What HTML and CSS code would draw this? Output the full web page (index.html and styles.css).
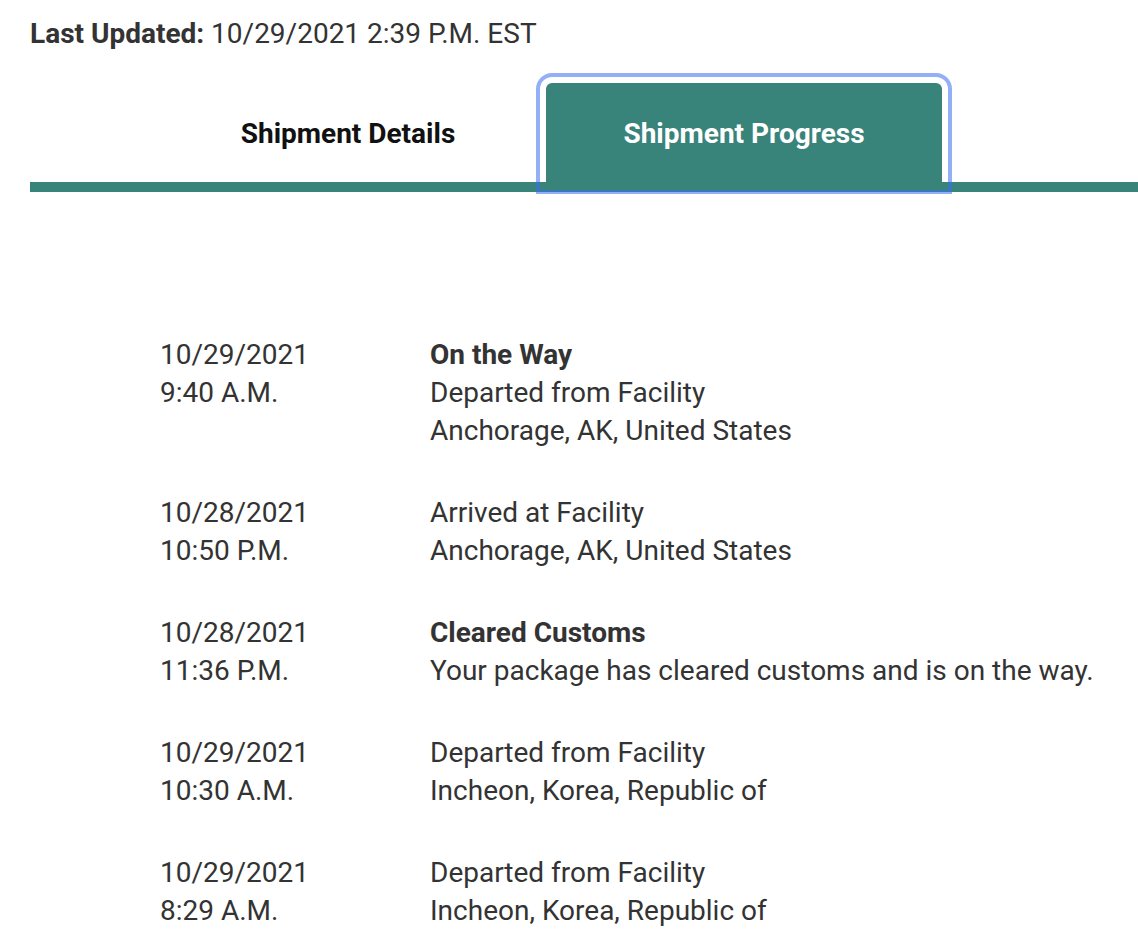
FILE: index.html
```html
<!DOCTYPE html>
<html>
<head>
<meta charset="utf-8">
<link rel="stylesheet" href="styles.css">
</head>
<body>
<div class="page">
  <p class="updated"><strong>Last Updated:</strong> 10/29/2021 2:39 P.M. EST</p>
  <div class="tabs">
    <button class="tab">Shipment Details</button>
    <button class="tab active">Shipment Progress</button>
  </div>
  <ul class="timeline">
    <li class="event">
      <div class="when">10/29/2021<br>9:40 A.M.</div>
      <div class="what"><strong>On the Way</strong><br>Departed from Facility<br>Anchorage, AK, United States</div>
    </li>
    <li class="event">
      <div class="when">10/28/2021<br>10:50 P.M.</div>
      <div class="what">Arrived at Facility<br>Anchorage, AK, United States</div>
    </li>
    <li class="event">
      <div class="when">10/28/2021<br>11:36 P.M.</div>
      <div class="what"><strong>Cleared Customs</strong><br>Your package has cleared customs and is on the way.</div>
    </li>
    <li class="event">
      <div class="when">10/29/2021<br>10:30 A.M.</div>
      <div class="what">Departed from Facility<br>Incheon, Korea, Republic of</div>
    </li>
    <li class="event">
      <div class="when">10/29/2021<br>8:29 A.M.</div>
      <div class="what">Departed from Facility<br>Incheon, Korea, Republic of</div>
    </li>
  </ul>
</div>
</body>
</html>
```

FILE: styles.css
```css
* { box-sizing: border-box; }
html, body { margin: 0; padding: 0; background: #fff; }
body {
  font-family: Roboto, "Liberation Sans", sans-serif;
  color: #333;
  overflow: hidden;
}
.page {
  padding-left: 30px;
  width: 1160px;
}
.updated {
  margin: 0;
  padding-top: 19px;
  font-size: 28px;
  line-height: 30px;
  color: #333;
}
.updated strong { font-weight: 700; }
.tabs {
  display: flex;
  margin-top: 34px;
  padding-left: 120px;
  border-bottom: 10px solid #38837a;
}
.tab {
  width: 396px;
  height: 101px;
  margin-bottom: -2px;
  border: 0;
  background: transparent;
  font-family: inherit;
  font-size: 28px;
  font-weight: 700;
  color: #111;
  padding: 0;
  position: relative;
}
.tab.active {
  background: #38837a;
  color: #fff;
  border-radius: 6px 6px 0 0;
  outline: 4px solid rgba(59, 110, 240, 0.55);
  outline-offset: 6px;
  z-index: 1;
}
.timeline {
  list-style: none;
  margin: 144px 0 0;
  padding: 0 0 0 130px;
}
.event {
  display: flex;
  font-size: 28px;
  line-height: 38px;
  margin-bottom: 44px;
}
.when { width: 270px; flex: none; }
.what strong { font-weight: 700; }
```
